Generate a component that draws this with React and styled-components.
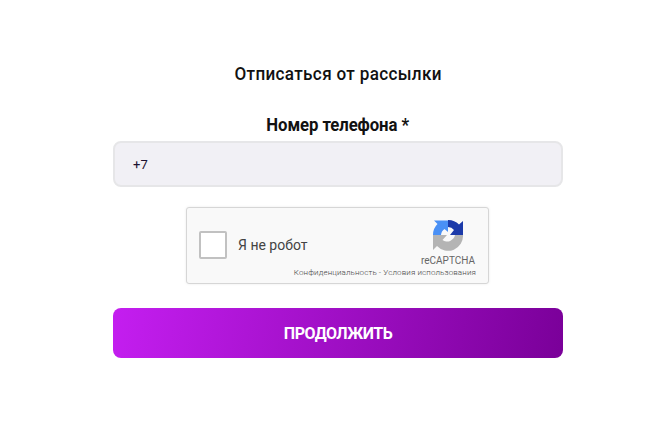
import React from "react";
import styled, { createGlobalStyle } from "styled-components";

const Global = createGlobalStyle`
  html, body { margin: 0; padding: 0; background: #fff; }
  * { box-sizing: border-box; }
`;
const Page = styled.div`
  width: 666px; height: 426px; padding: 63px 103px 0 113px;
  display: flex; flex-direction: column; align-items: center;
  font-family: Roboto, "Liberation Sans", sans-serif; overflow: hidden;
`;
const Title = styled.h1`
  margin: 0; font-size: 18px; line-height: 22px; font-weight: 500; color: #111; letter-spacing: .35px;
  transform: scaleX(.95);
`;
const Label = styled.label`
  margin-top: 29px; font-size: 18px; line-height: 22px; font-weight: 700; color: #111; letter-spacing: -.1px;
  display: inline-block; transform: scaleX(.93);
`;
const Input = styled.div`
  margin-top: 5px; width: 450px; height: 46px; padding: 0 18px; display: flex; align-items: center;
  background: #f1f0f5; border: 2px solid #e6e6e8; border-radius: 8px;
  font-size: 13px; color: #1c1230;
`;
const Captcha = styled.div`
  position: relative; margin: 20px 1px 0 0; width: 303px; height: 77px; display: flex; align-items: center;
  padding: 0 12px; background: #f9f9f9; border: 1px solid #d6d6d6; border-radius: 3px;
  box-shadow: 0 0 3px rgba(0,0,0,.08);
`;
const Check = styled.span`
  width: 28px; height: 28px; margin-top: -2px; background: #fff; border: 2px solid #c1c1c1; border-radius: 2px; flex: none;
`;
const CheckText = styled.span`
  margin-left: 11px; margin-top: -2px; font-size: 14px; color: #444;
`;
const Brand = styled.div`
  position: absolute; right: 13px; top: 11px; display: flex; flex-direction: column; align-items: center;
  color: #666; font-size: 10px; line-height: 12px;
`;
const BrandName = styled.span`
  margin-top: 4px;
`;
const Terms = styled.div`
  position: absolute; right: 12px; bottom: 5px; font-size: 8px; font-weight: 300; line-height: 11px; color: #444; white-space: nowrap; letter-spacing: .12px;
`;
const Button = styled.button`
  margin-top: 24px; width: 450px; height: 50px; border: 0; border-radius: 8px;
  background: linear-gradient(100deg, #c41ef0 0%, #7a0099 100%);
  color: #fff; font-family: Roboto, "Liberation Sans", sans-serif; font-size: 16px; font-weight: 700; letter-spacing: -.5px;
`;

const Logo = () => (
  <svg width="32" height="32" viewBox="0 0 32 32">
    <path d="M1 16 A15 15 0 0 1 5.5 5 L2 1.5 H16 V13 L12.5 10 A8 8 0 0 0 9 16 Z" fill="#4a90f5" />
    <path d="M16 1 A15 15 0 0 1 27 5.5 L31 2 V16 H18 L22 11 A8 8 0 0 0 16 8 Z" fill="#1c3aa9" />
    <path d="M1 16 H15 L10.5 21 A8 8 0 0 0 23 16 H31 A15 15 0 0 1 5 27 L1 31 Z" fill="#b4b4b4" />
  </svg>
);

export default function App() {
  return (
    <Page>
      <Global />
      <Title>Отписаться от рассылки</Title>
      <Label>Номер телефона *</Label>
      <Input>+7</Input>
      <Captcha>
        <Check />
        <CheckText>Я не робот</CheckText>
        <Brand>
          <Logo />
          <BrandName>reCAPTCHA</BrandName>
        </Brand>
        <Terms>Конфиденциальность - Условия использования</Terms>
      </Captcha>
      <Button>ПРОДОЛЖИТЬ</Button>
    </Page>
  );
}
